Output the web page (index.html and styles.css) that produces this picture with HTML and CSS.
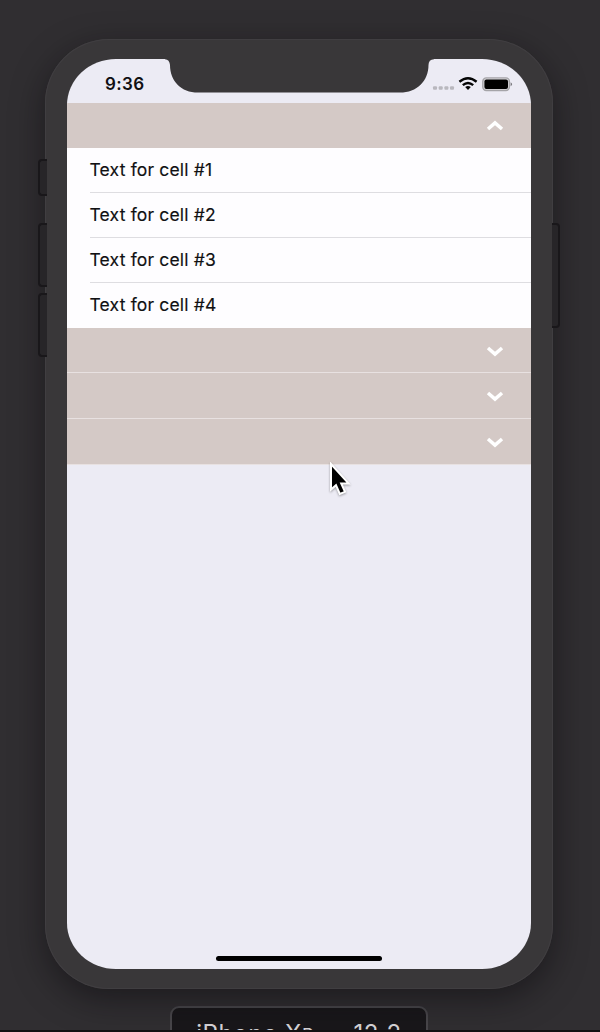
FILE: index.html
```html
<!DOCTYPE html>
<html lang="en">
<head>
<meta charset="utf-8">
<title>Simulator</title>
<link rel="stylesheet" href="styles.css">
</head>
<body>
<main class="stage">
  <div class="device">
    <span class="button mute"></span>
    <span class="button volume-up"></span>
    <span class="button volume-down"></span>
    <span class="button power"></span>
    <div class="screen">
      <header class="status">
        <time class="clock">9:36</time>
        <div class="indicators">
          <svg width="82" height="16" viewBox="0 0 82 16">
            <g fill="#b9b8be"><rect x="1" y="9.2" width="4" height="3.6" rx="1"/><rect x="6.7" y="9.2" width="4" height="3.6" rx="1"/><rect x="12.4" y="9.2" width="4" height="3.6" rx="1"/><rect x="18" y="9.2" width="4" height="3.6" rx="1"/></g>
            <g fill="none" stroke="#050505" stroke-width="2.4"><path d="M27.4 4.8Q36 -2.2 44.6 4.8"/><path d="M30.8 8.2Q36 3.7 41.2 8.2"/></g>
            <path d="M33.2 10Q36 7.8 38.8 10L36 13Z" fill="#050505"/>
            <rect x="50.8" y=".9" width="26.6" height="12.6" rx="3.5" fill="#dad9dd" stroke="#a5a4a8" stroke-width="1.4"/>
            <rect x="52.4" y="2.5" width="23.6" height="9.4" rx="2" fill="#000"/>
            <path d="M78.6 5.2Q81.6 7.2 78.6 9.2Z" fill="#77767a"/>
          </svg>
        </div>
      </header>
      <section class="group">
        <div class="section-header"><svg class="chevron" width="18" height="12" viewBox="0 0 18 12"><path d="M2 9L9 2.9L16 9"/></svg></div>
        <ul class="cells">
          <li class="cell">Text for cell #1</li>
          <li class="cell">Text for cell #2</li>
          <li class="cell">Text for cell #3</li>
          <li class="cell">Text for cell #4</li>
        </ul>
      </section>
      <section class="section-header closed"><svg class="chevron" width="18" height="12" viewBox="0 0 18 12"><path d="M2 3L9 9.1L16 3"/></svg></section>
      <section class="section-header closed"><svg class="chevron" width="18" height="12" viewBox="0 0 18 12"><path d="M2 3L9 9.1L16 3"/></svg></section>
      <section class="section-header closed"><svg class="chevron" width="18" height="12" viewBox="0 0 18 12"><path d="M2 3L9 9.1L16 3"/></svg></section>
      <div class="home"></div>
      <svg class="notch" width="270" height="34" viewBox="0 0 270 34"><path d="M0 0H269V.2Q263.5 .5 263.5 6C263.5 22 252 33.6 235 33.6H33C16 33.6 5 22 5 6Q4.500 .5 0 .2Z"/></svg>
    </div>
  </div>
  <div class="label">iPhone X<span class="small-cap">R</span> — 12.2</div>
</main>
<svg class="cursor" width="28" height="36" viewBox="0 0 28 36"><path d="M4 2V27.600L9 23.200L12.800 32L18 29.800L14.200 21.400H21.500Z"/></svg>
</body>
</html>
```
FILE: styles.css
```css
* { box-sizing: border-box; }
body {
  margin: 0;
  height: 1032px;
  overflow: hidden;
  background: #302e31;
  font-family: Inter, "Liberation Sans", sans-serif;
}
.stage {
  height: 1032px;
  padding-top: 39px;
  display: flex;
  flex-direction: column;
  align-items: center;
  overflow: hidden;
  border-bottom: 2px solid #111012;
}
.device {
  position: relative;
  flex: none;
  width: 508px;
  height: 950px;
  margin-right: 2px;
  padding: 20px 22px;
  border-radius: 64px;
  background: #393739;
  box-shadow: inset 0 0 0 1px #403e41, 0 10px 32px rgba(12, 9, 14, .52);
}
.button {
  position: absolute;
  left: -7px;
  width: 9px;
  background: #272528;
  border: 2px solid #19171a;
  border-right: 0;
  border-radius: 4px 0 0 4px;
}
.mute { top: 120px; height: 37px; }
.volume-up { top: 184px; height: 64px; }
.volume-down { top: 254px; height: 64px; }
.power {
  left: auto;
  right: -7px;
  top: 184px;
  width: 8px;
  height: 105px;
  border-right: 2px solid #19171a;
  border-left: 0;
  border-radius: 0 4px 4px 0;
}
.screen {
  position: relative;
  display: flex;
  flex-direction: column;
  height: 910px;
  overflow: hidden;
  border-radius: 49px / 46px;
  background: #ecebf4;
}
.status {
  flex: none;
  height: 44.4px;
  padding: 14.5px 17px 0 38px;
  display: flex;
  justify-content: space-between;
}
.clock {
  font-size: 17px;
  line-height: 21px;
  font-weight: 600;
  letter-spacing: .4px;
  color: #101012;
}
.indicators { height: 16px; margin-top: 3px; }
.indicators svg { display: block; }
.section-header {
  flex: none;
  height: 45px;
  padding-right: 27px;
  display: flex;
  align-items: center;
  justify-content: flex-end;
  background: #d4c9c6;
}
.closed {
  height: 45.6px;
  padding-top: 1px;
  border-bottom: 1px solid #e8e1e1;
}
.chevron {
  fill: none;
  stroke: #fff;
  stroke-width: 3.5;
}
.cells {
  margin: 0;
  padding: 0 0 0 22.5px;
  list-style: none;
  background: #fefdff;
}
.cell {
  height: 44.85px;
  line-height: 44px;
  font-size: 17.5px;
  letter-spacing: .17px;
  color: #101012;
  -webkit-text-stroke: .15px #101012;
  border-bottom: 1px solid #dedde1;
}
.cell:last-child { border-bottom: 0; }
.home {
  width: 166px;
  height: 5px;
  margin: auto auto 8px 149px;
  border-radius: 3px;
  background: #000;
}
.notch {
  position: absolute;
  top: 0;
  left: 98px;
  fill: #393739;
}
.label {
  flex: none;
  width: 258px;
  height: 50px;
  margin: 17px 2px 0 0;
  padding-top: 12px;
  border: 2px solid #48464a;
  border-radius: 9px;
  background: #19171a;
  color: #d5d3d6;
  font-size: 24px;
  letter-spacing: .6px;
  line-height: 28px;
  text-align: center;
  white-space: nowrap;
}
.small-cap { font-size: 18px; }
.cursor {
  position: absolute;
  left: 327px;
  top: 462px;
  fill: #000;
  stroke: #fff;
  stroke-width: 2;
  filter: drop-shadow(0 1px 1px rgba(0, 0, 0, .35));
}
```
